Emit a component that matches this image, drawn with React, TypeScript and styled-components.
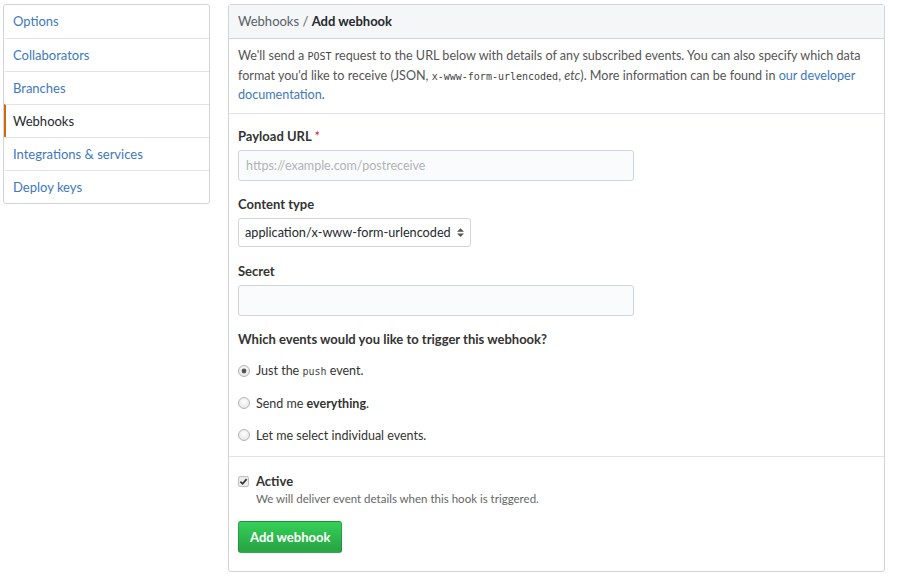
import styled, { createGlobalStyle } from "styled-components"

const GlobalStyle = createGlobalStyle`
	html, body {
		margin: 0;
		padding: 0;
		background: #fff;
	}
	body {
		font-family: "Lato", "Liberation Sans", sans-serif;
		font-size: 13px;
		color: #24292e;
	}
`

const sideItems = [
	"Options",
	"Collaborators",
	"Branches",
	"Webhooks",
	"Integrations & services",
	"Deploy keys",
]

const radios = [
	{ key: "push", checked: true },
	{ key: "all", checked: false },
	{ key: "select", checked: false },
]

function Radio({ checked }: { checked: boolean }) {
	return (
		<RadioMark viewBox="0 0 12 12" width={12} height={12}>
			<defs>
				<radialGradient id="rg" cx="50%" cy="40%" r="60%">
					<stop offset="0%" stopColor="#fff" />
					<stop offset="100%" stopColor="#e4e4e4" />
				</radialGradient>
			</defs>
			<circle cx="6" cy="6" r="5.5" fill="url(#rg)" stroke="#b5b5b5" />
			{checked && <circle cx="6" cy="6" r="2.4" fill="#555" />}
		</RadioMark>
	)
}

export default function App() {
	return (
		<>
			<GlobalStyle />
			<Page>
				<SideMenu>
					{sideItems.map((item) => (
						<SideItem key={item} $selected={item === "Webhooks"}>
							{item}
						</SideItem>
					))}
				</SideMenu>

				<Box>
					<BoxHeader>
						Webhooks / <strong>Add webhook</strong>
					</BoxHeader>
					<Intro>
						We'll send a <Code>POST</Code> request to the URL below with details of any subscribed events. You can
						also specify which data format you'd like to receive (JSON, <Code>x-www-form-urlencoded</Code>, <em>etc</em>).
						More information can be found in <Link>our developer documentation</Link>.
					</Intro>

					<FormBody>
						<Field>
							<Label>
								Payload URL <Required>*</Required>
							</Label>
							<TextInput placeholder="https://example.com/postreceive" />
						</Field>

						<Field>
							<Label>Content type</Label>
							<SelectBox>
								application/x-www-form-urlencoded
								<SelectArrows viewBox="0 0 8 10" width={7} height={9}>
									<path d="M4 0 L8 4 H0 Z" fill="#555" />
									<path d="M4 10 L8 6 H0 Z" fill="#555" />
								</SelectArrows>
							</SelectBox>
						</Field>

						<Field>
							<Label>Secret</Label>
							<TextInput />
						</Field>

						<Field>
							<Label>Which events would you like to trigger this webhook?</Label>
							<RadioList>
								{radios.map((r) => (
									<RadioRow key={r.key}>
										<Radio checked={r.checked} />
										{r.key === "push" && (
											<span>
												Just the <SmallCode>push</SmallCode> event.
											</span>
										)}
										{r.key === "all" && (
											<span>
												Send me <Strong>everything</Strong>.
											</span>
										)}
										{r.key === "select" && <span>Let me select individual events.</span>}
									</RadioRow>
								))}
							</RadioList>
						</Field>
					</FormBody>

					<Footer>
						<CheckRow>
							<CheckMark viewBox="0 0 12 12" width={11} height={11}>
								<rect x="0.5" y="0.5" width="11" height="11" rx="2" fill="#ececec" stroke="#b5b5b5" />
								<path d="M2.6 6.2 L5 8.6 L9.4 3.4" fill="none" stroke="#333" strokeWidth="1.8" />
							</CheckMark>
							<div>
								<CheckTitle>Active</CheckTitle>
								<Note>We will deliver event details when this hook is triggered.</Note>
							</div>
						</CheckRow>
						<PrimaryButton>Add webhook</PrimaryButton>
					</Footer>
				</Box>
			</Page>
		</>
	)
}

const Page = styled.div`
	display: flex;
	align-items: flex-start;
	gap: 18px;
	padding: 4px 13px 0 3px;
	width: 898px;
	box-sizing: border-box;
`

const SideMenu = styled.nav`
	width: 207px;
	flex: none;
	border: 1px solid #d1d5da;
	border-radius: 3px;
	box-sizing: border-box;
	display: flex;
	flex-direction: column;
`

const SideItem = styled.div<{ $selected: boolean }>`
	height: 32px;
	line-height: 32px;
	padding-left: 7px;
	color: ${(p) => (p.$selected ? "#24292e" : "#4078c0")};
	border-left: 2px solid ${(p) => (p.$selected ? "#d26911" : "transparent")};
	border-top: 1px solid #e1e4e8;
	font-size: 13px;

	&:first-child {
		border-top: none;
		height: 33px;
		line-height: 33px;
	}
`

const Box = styled.section`
	flex: 1;
	border: 1px solid #d1d5da;
	border-radius: 3px;
`

const BoxHeader = styled.div`
	height: 33px;
	line-height: 33px;
	padding: 0 9px;
	background: #f5f6f7;
	border-bottom: 1px solid #d1d5da;
	color: #586069;
	font-size: 13px;

	strong {
		color: #24292e;
		font-weight: 700;
	}
`

const Intro = styled.p`
	margin: 0;
	padding: 8px 9px 8px;
	line-height: 18.5px;
	color: #555;
	font-size: 12.6px;
	border-bottom: 1px solid #e1e4e8;
`

const Code = styled.code`
	font-family: "DejaVu Sans Mono", monospace;
	font-size: 10px;
	color: #444;
`

const SmallCode = styled(Code)`
	font-size: 10px;
`

const Link = styled.a`
	color: #4078c0;
	text-decoration: none;
	cursor: pointer;
`

const FormBody = styled.div`
	display: flex;
	flex-direction: column;
	gap: 15px;
	padding: 14px 9px 11px;
	border-bottom: 1px solid #e1e4e8;
`

const Field = styled.div`
	display: flex;
	flex-direction: column;
	gap: 6px;
`

const Label = styled.label`
	font-weight: 700;
	font-size: 13px;
	color: #333;
	line-height: 16px;
`

const Required = styled.span`
	color: #cb2431;
	font-weight: 400;
`

const TextInput = styled.input`
	width: 396px;
	height: 31px;
	box-sizing: border-box;
	border: 1px solid #d1d5da;
	border-radius: 3px;
	background: #fafbfc;
	padding: 0 7px;
	font-family: inherit;
	font-size: 12.5px;
	color: #24292e;

	&::placeholder {
		color: #b0b4b8;
	}
`

const SelectBox = styled.div`
	display: inline-flex;
	align-items: center;
	gap: 6px;
	align-self: flex-start;
	height: 29px;
	box-sizing: border-box;
	margin: 0 0 1px;
	padding: 0 6px;
	border: 1px solid #d1d5da;
	border-radius: 3px;
	background: #fff;
	font-size: 12.7px;
	color: #24292e;
`

const SelectArrows = styled.svg`
	display: block;
`

const RadioList = styled.div`
	display: flex;
	flex-direction: column;
	gap: 13px;
	padding-top: 9px;
`

const RadioRow = styled.div`
	display: flex;
	align-items: center;
	gap: 6px;
	height: 19px;
	font-size: 12.5px;
	color: #333;
	line-height: 19px;
`

const RadioMark = styled.svg`
	flex: none;
`

const Strong = styled.strong`
	font-weight: 700;
`

const Footer = styled.div`
	padding: 16px 9px 18px;
	display: flex;
	flex-direction: column;
	gap: 13px;
`

const CheckRow = styled.div`
	display: flex;
	align-items: flex-start;
	gap: 7px;
`

const CheckMark = styled.svg`
	flex: none;
	margin-top: 3px;
`

const CheckTitle = styled.div`
	font-size: 13px;
	font-weight: 700;
	color: #333;
	line-height: 17px;
`

const Note = styled.div`
	font-size: 11.5px;
	color: #666;
	line-height: 18px;
`

const PrimaryButton = styled.button`
	align-self: flex-start;
	height: 32px;
	padding: 0 11px;
	border: 1px solid rgba(27, 31, 35, 0.2);
	border-radius: 3px;
	background-image: linear-gradient(-180deg, #34d058 0%, #28a745 90%);
	color: #fff;
	font-family: inherit;
	font-size: 13px;
	font-weight: 700;
	cursor: pointer;
`
